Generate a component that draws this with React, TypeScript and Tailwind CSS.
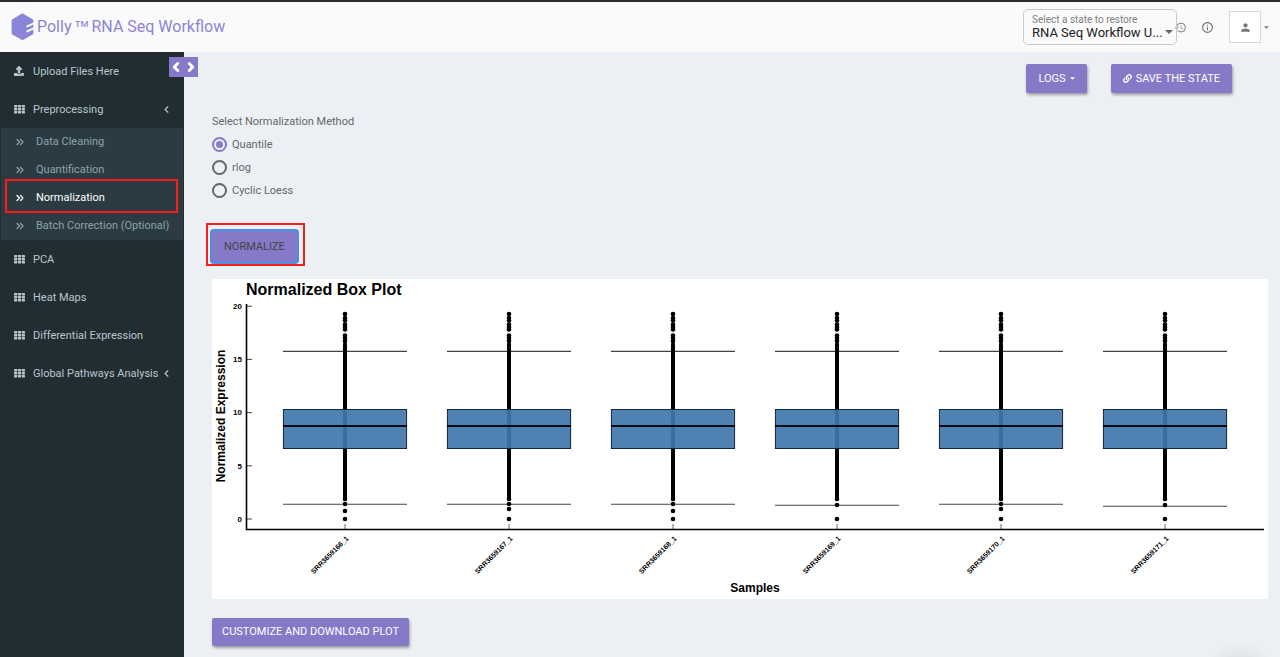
import React, { useState } from "react";
import { FaUpload, FaLink } from "react-icons/fa";
import { MdHistory, MdInfoOutline, MdPerson } from "react-icons/md";
import { ChevronLeft, ChevronRight, ChevronsRight } from "lucide-react";

function GridIcon() {
  return (
    <svg viewBox="0 0 11 9" className="h-[9px] w-[11px]" fill="currentColor" aria-hidden="true">
      {[0, 3.9, 7.8].map((x) =>
        [0, 3, 6].map((y) => <rect key={`${x}-${y}`} x={x} y={y} width="3.2" height="2.4" rx="0.4" />)
      )}
    </svg>
  );
}

function Caret({ className }: { className: string }) {
  return (
    <svg viewBox="0 0 8 4" className={className} fill="currentColor" aria-hidden="true">
      <path d="M0 0H8L4 4Z" />
    </svg>
  );
}

function Logo() {
  return (
    <svg viewBox="0 0 24 28" className="h-7 w-6 shrink-0" aria-hidden="true">
      <path
        d="M12.4 0.8 21.6 6.2Q22.4 6.8 22.4 7.8V20Q22.4 21 21.6 21.5L12.4 26.8Q11.5 27.2 10.6 26.8L1.4 21.5Q0.6 21 0.6 20V7.8Q0.6 6.8 1.4 6.2L10.6 0.8Q11.5 0.4 12.4 0.8Z"
        fill="#8a85d6"
      />
      <path d="M16.2 13.3 24 9.8M16.2 18.4 24 14.6" stroke="#fafafa" strokeWidth="1.9" strokeLinecap="round" />
    </svg>
  );
}

function Highlight({ className }: { className: string }) {
  return <span className={`pointer-events-none absolute z-10 border-2 border-[#fb1d1a] ${className}`} />;
}

function NavItem({ label, icon, arrow }: { label: string; icon?: React.ReactNode; arrow?: boolean }) {
  return (
    <a href="#" className="flex h-[38px] items-center pr-3 pl-3.5 leading-4 text-[#b8c7ce]">
      <span className="mr-2 w-[11px]">{icon ?? <GridIcon />}</span>
      <span className="flex-1 pt-0.5 whitespace-nowrap">{label}</span>
      {arrow && <ChevronLeft className="size-[11px]" strokeWidth={2.5} />}
    </a>
  );
}

const subItems = ["Data Cleaning", "Quantification", "Normalization", "Batch Correction (Optional)"];

function Sidebar() {
  return (
    <aside className="relative w-[184px] shrink-0 bg-[#222d32] text-[11px]">
      <button
        aria-label="Resize sidebar"
        className="absolute top-[5px] left-[169px] z-20 flex h-5 w-[29px] items-center justify-between bg-[#8679c8] text-white"
      >
        <ChevronLeft className="size-3.5" strokeWidth={5} />
        <ChevronRight className="size-3.5" strokeWidth={5} />
      </button>
      <nav>
        <NavItem label="Upload Files Here" icon={<FaUpload className="size-2.5" />} />
        <NavItem label="Preprocessing" arrow />
        <ul className="mx-px bg-[#2c3b41]">
          {subItems.map((s) => (
            <li key={s} className="relative">
              <a
                href="#"
                className={`flex h-7 items-center pl-[13px] ${s === "Normalization" ? "text-white" : "text-[#8aa4af]"}`}
              >
                <ChevronsRight className="mr-2.5 size-3" strokeWidth={2.5} />
                <span className="whitespace-nowrap">{s}</span>
              </a>
              {s === "Normalization" && <Highlight className="-top-[5px] right-[5px] -bottom-px left-1" />}
            </li>
          ))}
        </ul>
        <NavItem label="PCA" />
        <NavItem label="Heat Maps" />
        <NavItem label="Differential Expression" />
        <NavItem label="Global Pathways Analysis" arrow />
      </nav>
    </aside>
  );
}

function Header() {
  return (
    <header className="flex h-[53px] items-center border-t-2 border-b border-t-[#2b292d] border-b-[#d2d6de] bg-[#fafafa] pr-3 pl-[11px]">
      <Logo />
      <h1 className="ml-0.5 flex text-[16px] whitespace-nowrap text-[#8a85d6]">
        Polly<span className="mx-0.5 font-['Liberation_Sans',sans-serif]">™</span>RNA Seq Workflow
      </h1>
      <div className="relative ml-auto h-9 w-[154px] rounded-[5px] border border-[#c9c9c9]">
        <label htmlFor="state" className="block pt-1 pl-2 text-[10px] leading-[11px] text-[#808080]">
          Select a state to restore
        </label>
        <select
          id="state"
          className="block w-full appearance-none bg-transparent pr-2 pl-2 font-[Roboto,sans-serif] text-[13px] leading-4 text-[#222]"
        >
          <option>RNA Seq Workflow U...</option>
        </select>
        <Caret className="pointer-events-none absolute right-[3px] bottom-2.5 h-1 w-2 text-[#666]" />
      </div>
      <button aria-label="History" className="-ml-[3px] text-[#8a8a8a]">
        <MdHistory className="size-[13px]" />
      </button>
      <button aria-label="Information" className="ml-3.5 text-[#777]">
        <MdInfoOutline className="size-[13px]" />
      </button>
      <button aria-label="Account" className="ml-[15px] flex items-center text-[#777]">
        <span className="flex h-8 w-8 items-center justify-center border border-[#d8d8d8] bg-white">
          <MdPerson className="size-[13px]" />
        </span>
        <Caret className="-mr-px ml-[3px] h-[3px] w-[5px]" />
      </button>
    </header>
  );
}

const raised = "rounded-[2px] bg-[#8679c8] text-[11px] leading-4 text-white shadow-[1px_2px_3px_rgba(0,0,0,0.35)]";

const samples = [
  { name: "SRR3659166_1", low: 225, dots: [225, 232, 240] },
  { name: "SRR3659167_1", low: 225, dots: [225, 230, 240] },
  { name: "SRR3659168_1", low: 225, dots: [225, 232, 240] },
  { name: "SRR3659169_1", low: 226, dots: [226, 240] },
  { name: "SRR3659170_1", low: 225, dots: [225, 230, 240] },
  { name: "SRR3659171_1", low: 227, dots: [226, 240] },
];
const upperDots = [35, 39, 41.5, 45.5, 48, 50.5, 56.5, 59, 62];

function BoxPlot() {
  return (
    <svg
      viewBox="0 0 1056 320"
      className="mt-[17px] block w-full bg-white font-['Liberation_Sans',Arial,sans-serif] font-bold"
      role="img"
      aria-label="Normalized Box Plot"
    >
      <text x="34" y="16" fontSize="16">Normalized Box Plot</text>
      <text transform="translate(13 137) rotate(-90)" fontSize="12" textAnchor="middle">Normalized Expression</text>
      <text x="543" y="313" fontSize="12" textAnchor="middle">Samples</text>
      {[0, 5, 10, 15, 20].map((v) => {
        const y = 240 - v * 10.64;
        return (
          <g key={v}>
            <path d={`M35 ${y}H40`} stroke="#444" strokeWidth="1" />
            <text x="30" y={y + 2.7} fontSize="8" textAnchor="end">{v}</text>
          </g>
        );
      })}
      {samples.map((s, i) => {
        const x = 133 + i * 164;
        return (
          <g key={s.name}>
            <path d={`M${x - 62} 72.4H${x + 62}M${x - 62} ${s.low + 0.3}H${x + 62}`} stroke="#444" strokeWidth="1.1" />
            <path d={`M${x} 65V220`} stroke="#000" strokeWidth="4" strokeLinecap="round" />
            {upperDots.concat(s.dots, [220]).map((y, k) => (
              <circle key={k} cx={x} cy={y} r="2.3" />
            ))}
            <rect x={x - 61.6} y="130.5" width="123.2" height="39" fill="#4076ac" fillOpacity="0.92" stroke="#15253a" />
            <path d={`M${x - 62} 147H${x + 62}`} stroke="#030a12" strokeWidth="1.8" />
            <path d={`M${x} 245V250`} stroke="#666" />
            <text transform={`translate(${x + 4} 260) rotate(-45)`} fontSize="7" textAnchor="end">{s.name}</text>
          </g>
        );
      })}
      <path d="M34.5 25V250.5H1052" fill="none" stroke="#000" strokeWidth="1.6" />
    </svg>
  );
}

function Main() {
  const [method, setMethod] = useState("Quantile");
  return (
    <main className="relative min-w-0 flex-1 overflow-hidden bg-[#ecf0f5] pr-3 pb-[11px] pl-7 text-[11px] leading-4 text-[#666]">
      <div className="flex justify-end gap-6 pt-3 pr-9">
        <button className={`flex h-[29px] items-center gap-1 px-3 ${raised}`}>
          LOGS <Caret className="h-[3px] w-[5px]" />
        </button>
        <button className={`flex h-[29px] items-center gap-1 px-3 ${raised}`}>
          <FaLink className="size-[9px]" /> SAVE THE STATE
        </button>
      </div>
      <fieldset className="mt-[21px]">
        <legend className="h-4">Select Normalization Method</legend>
        <div className="mt-[3px]">
          {["Quantile", "rlog", "Cyclic Loess"].map((m) => (
            <label key={m} className="flex h-[23px] w-fit items-center gap-[5px]">
              <input
                type="radio"
                name="method"
                checked={method === m}
                onChange={() => setMethod(m)}
                className="size-[15px] appearance-none rounded-full border-2 border-[#666] checked:border-[#8679c8] checked:bg-[#8679c8] checked:bg-clip-content checked:p-0.5"
              />
              {m}
            </label>
          ))}
        </div>
      </fieldset>
      <div className="relative mt-[29px] w-fit">
        <button className="block h-[31px] rounded-[2px] bg-[#8679c8] px-3 text-[11px] leading-4 text-[#444] shadow-[0_0_0_2px_#4a90e2]">
          NORMALIZE
        </button>
        <Highlight className="-top-2 -right-2 -bottom-1 -left-1.5" />
      </div>
      <BoxPlot />
      <button className={`mt-[19px] block h-7 px-2.5 ${raised}`}>CUSTOMIZE AND DOWNLOAD PLOT</button>
      <div className="absolute right-0 -bottom-16 size-20 rounded-full bg-[radial-gradient(closest-side,rgba(0,0,0,0.12),transparent)]" />
    </main>
  );
}

export default function App() {
  return (
    <div className="flex min-h-screen flex-col font-[Roboto,sans-serif]">
      <Header />
      <div className="-mt-px flex flex-1">
        <Sidebar />
        <Main />
      </div>
    </div>
  );
}
